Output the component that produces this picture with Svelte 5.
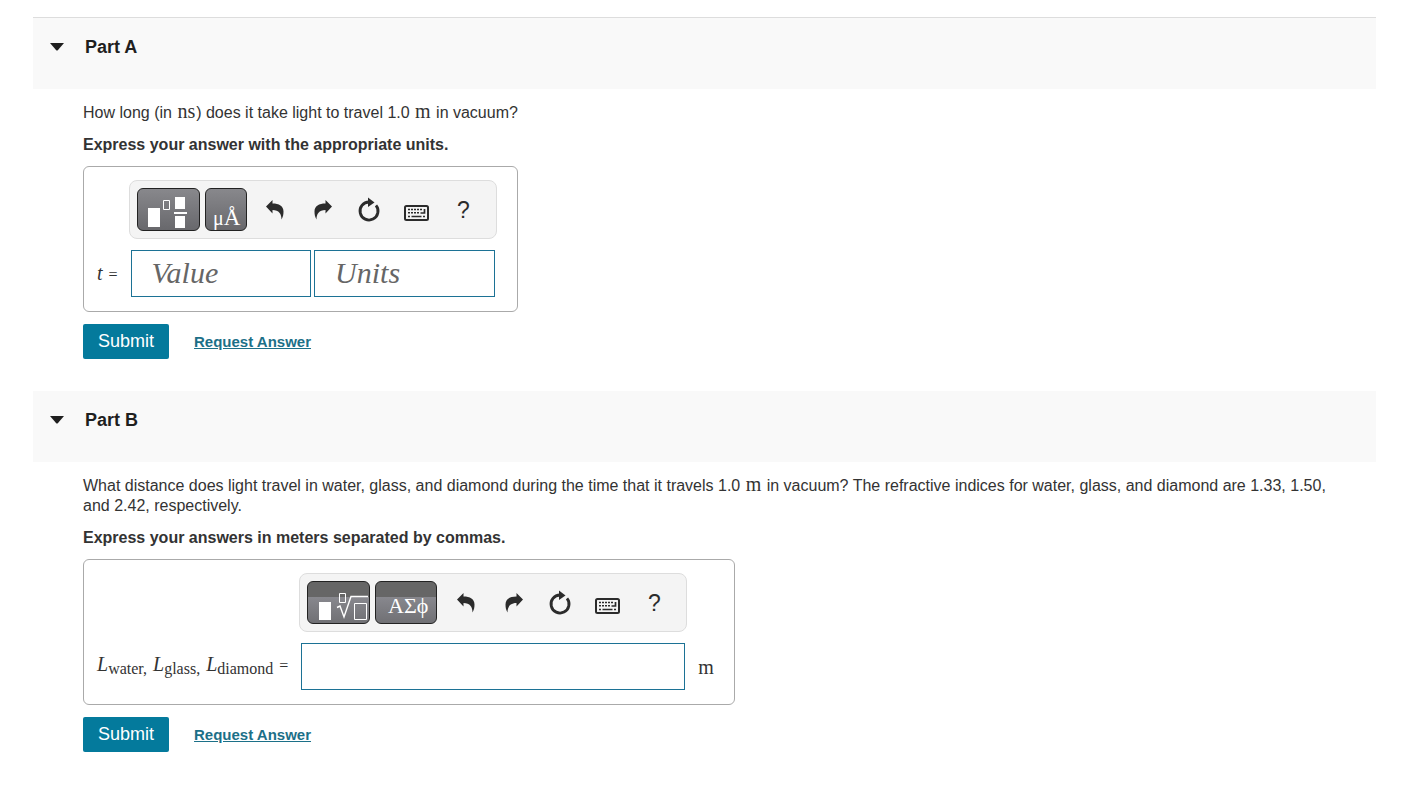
<script>
  const idA = "answer-a";
  const idB = "answer-b";

  let openA = true;
  let openB = true;
  let value = "";
  let units = "";
  let lengths = "";

  const tools = ["undo", "redo", "reset", "keyboard shortcuts", "help"];
</script>

<style>
  :global(body) {
    margin: 0;
    background: #fff;
  }

  main {
    padding: 17px 29px 0 33px;
    font: 16px/20px "Liberation Sans", Arial, sans-serif;
    color: #333;
  }

  h2 {
    margin: 0;
    height: 71px;
    background: #f9f9f9;
    font-size: 18px;
  }

  section:first-child h2 {
    border-top: 1px solid #ddd;
  }

  button {
    font: inherit;
    color: inherit;
    border: 0;
    padding: 0;
    background: none;
    cursor: pointer;
  }

  .toggle {
    display: flex;
    align-items: center;
    gap: 21px;
    padding: 19px 17px 0;
    color: #1f1f1f;
  }

  .closed svg {
    transform: rotate(-90deg);
  }

  .body {
    padding: 14px 30px 32px 50px;
  }

  p {
    margin: 0 0 12px;
  }

  .instructions {
    margin-bottom: 11px;
    font-weight: bold;
  }

  .math {
    font-family: "Liberation Serif", "Times New Roman", serif;
    font-size: 20px;
    line-height: 1;
  }

  p .math {
    padding: 0 1px;
    line-height: 16px;
  }

  .answer {
    display: inline-grid;
    grid-template-columns: auto auto auto;
    align-items: center;
    row-gap: 11px;
    padding: 13px 20px 14px 13px;
    border: 1px solid #aaa;
    border-radius: 6px;
    vertical-align: top;
  }

  .toolbar {
    grid-column: 2;
    display: flex;
    align-items: center;
    padding: 7px 9px 7px 7px;
    border: 1px solid #ddd;
    border-radius: 8px;
    background: #f4f4f4;
  }

  .palette {
    display: flex;
    margin-right: 5px;
    border: 1px solid #222;
    border-radius: 6px;
    background: linear-gradient(#88888c, #68686c);
    color: #fff;
  }

  .split .palette {
    background: linear-gradient(#666 36%, #88888e 36%, #707074);
  }

  .tool {
    display: flex;
    justify-content: center;
    width: 47px;
  }

  .answer label {
    grid-column: 1;
    display: flex;
    align-items: baseline;
    gap: 6px;
    padding: 0 11px 2px 0;
  }

  .answer sub {
    font-size: 16px;
    line-height: 1;
    vertical-align: -3px;
  }

  .eq {
    font-size: 16px;
  }

  .unit {
    padding-left: 11px;
  }

  .fields {
    display: flex;
    gap: 3px;
    padding: 0 2px;
  }

  input {
    box-sizing: border-box;
    flex: 1;
    width: 0;
    height: 47px;
    padding: 0 20px 2px;
    border: 1px solid #1c7295;
    border-radius: 0;
    background: #fff;
    color: #333;
    font: italic 30px "Liberation Serif", "Times New Roman", serif;
  }

  input::placeholder {
    color: #666;
    opacity: 1;
  }

  .actions {
    display: flex;
    align-items: center;
    gap: 25px;
    margin-top: 12px;
  }

  .submit {
    padding: 7px 15px 8px;
    border-radius: 2px;
    background: #047a9c;
    color: #fff;
    font-size: 18px;
  }

  a {
    color: #1c7088;
    font-size: 15px;
    font-weight: bold;
  }
</style>

{#snippet arrow()}
  <svg width="14" height="8" viewBox="0 0 14 8" aria-hidden="true">
    <path d="M0 0H14L8 7Q7 8 6 7Z" fill="currentColor" />
  </svg>
{/snippet}

{#snippet toolIcons()}
  {#each tools as tool}
    <button type="button" class="tool" aria-label={tool}>
      <svg width="28" height="28" viewBox="0 0 28 28" fill="none" stroke="#2b2b2b">
        {#if tool === "undo"}
          <path
            d="M5 10.5L11.5 4V7.500C18 7.500 22.500 10 22.500 15.500C22.500 18.500 22 21 20.500 23.500C20.500 18 18 14 11.500 14V17.500Z"
            fill="#2b2b2b"
            stroke="none" />
        {:else if tool === "redo"}
          <path
            d="M24 10.5L17.5 4V7.500C11 7.500 6.500 10 6.500 15.500C6.500 18.500 7 21 8.500 23.500C8.500 18 11 14 17.500 14V17.500Z"
            fill="#2b2b2b"
            stroke="none" />
        {:else if tool === "reset"}
          <path d="M21 9.300A9 9 0 1 1 14 6" stroke-width="2.800" />
          <path d="M13 1.500L19.500 6.500L13 11Z" fill="#2b2b2b" stroke="none" />
        {:else if tool === "keyboard shortcuts"}
          <rect x="3" y="10" width="23" height="14" rx="1.500" stroke-width="2" />
          <path d="M6 13.500H20M6 16.800H18" stroke-width="1.500" stroke-dasharray="2 1" />
          <path d="M6 20.500H8M21 20.500H23" stroke-width="1.500" />
          <path d="M9.500 20.500H19.500M18.500 17H22.500V13" stroke-width="1.700" />
        {:else}
          <text x="8" y="22" font-size="23" font-family="Liberation Sans, sans-serif" fill="#2b2b2b" stroke="none">?</text>
        {/if}
      </svg>
    </button>
  {/each}
{/snippet}

<main>
  <section>
    <h2>
      <button type="button" class="toggle" class:closed={!openA} aria-expanded={openA} on:click={() => (openA = !openA)}>
        {@render arrow()}
        Part A
      </button>
    </h2>
    {#if openA}
      <div class="body">
        <p>
          How long (in <span class="math">ns</span>) does it take light to travel 1.0
          <span class="math">m</span> in vacuum?
        </p>
        <p class="instructions">Express your answer with the appropriate units.</p>
        <div class="answer">
          <div class="toolbar">
            <button type="button" class="palette" aria-label="templates">
              <svg width="61" height="41" viewBox="0 0 61 41" fill="#fff">
                <path d="M10 19H22V38H10ZM37 8H47V20H37ZM36 23H49V25H36ZM37 27H47V39H37Z" />
                <path d="M25.500 11.500H31.500V20.500H25.500Z" fill="none" stroke="#fff" />
              </svg>
            </button>
            <button type="button" class="palette" aria-label="unit symbols">
              <svg width="40" height="41" viewBox="0 0 40 41" fill="#fff" font-family="Liberation Serif, serif">
                <text x="7" y="36" font-size="20">μ<tspan font-size="23">Å</tspan></text>
              </svg>
            </button>
            {@render toolIcons()}
          </div>
          <label class="math" for={idA}>
            <span><i>t</i></span>
            <span class="eq">=</span>
          </label>
          <div class="fields">
            <input id={idA} placeholder="Value" bind:value />
            <input aria-label="Units" placeholder="Units" bind:value={units} />
          </div>
        </div>
        <div class="actions">
          <button type="button" class="submit">Submit</button>
          <a href="#request-a">Request Answer</a>
        </div>
      </div>
    {/if}
  </section>

  <section>
    <h2>
      <button type="button" class="toggle" class:closed={!openB} aria-expanded={openB} on:click={() => (openB = !openB)}>
        {@render arrow()}
        Part B
      </button>
    </h2>
    {#if openB}
      <div class="body">
        <p>
          What distance does light travel in water, glass, and diamond during the time that it travels 1.0
          <span class="math">m</span> in vacuum? The refractive indices for water, glass, and diamond are
          1.33, 1.50, and 2.42, respectively.
        </p>
        <p class="instructions">Express your answers in meters separated by commas.</p>
        <div class="answer">
          <div class="toolbar split">
            <button type="button" class="palette" aria-label="templates">
              <svg width="61" height="41" viewBox="0 0 61 41" fill="none" stroke="#fff">
                <path d="M11 20H23V38H11Z" fill="#fff" stroke="none" />
                <path d="M31.500 11.500H37.500V20.500H31.500ZM46.500 21.500H58.500V37.500H46.500Z" />
                <path d="M29 25.500L32 24L36 35L43 14.500H60" stroke-width="1.400" />
              </svg>
            </button>
            <button type="button" class="palette" aria-label="Greek letters">
              <svg width="60" height="41" viewBox="0 0 60 41" fill="#fff">
                <text x="12" y="31" font-size="22" font-family="Liberation Serif, serif">ΑΣϕ</text>
              </svg>
            </button>
            {@render toolIcons()}
          </div>
          <label class="math" for={idB}>
            <span><i>L</i><sub>water,</sub></span>
            <span><i>L</i><sub>glass,</sub></span>
            <span><i>L</i><sub>diamond</sub></span>
            <span class="eq">=</span>
          </label>
          <div class="fields">
            <input id={idB} bind:value={lengths} />
          </div>
          <span class="math unit">m</span>
        </div>
        <div class="actions">
          <button type="button" class="submit">Submit</button>
          <a href="#request-b">Request Answer</a>
        </div>
      </div>
    {/if}
  </section>
</main>
